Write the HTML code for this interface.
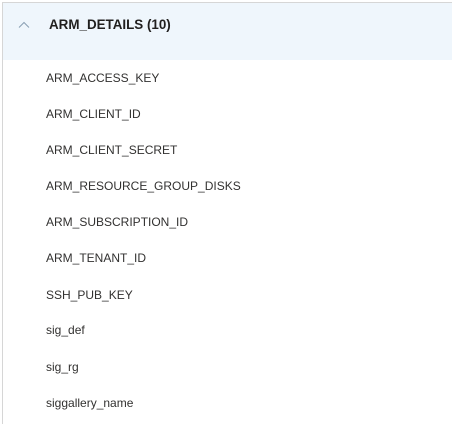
<!DOCTYPE html>
<html><head><style>
html,body{margin:0;padding:0;background:#fff;width:452px;height:424px;overflow:hidden;font-family:"Segoe UI","Liberation Sans",sans-serif}
.wrap{position:absolute;left:2px;top:2px;right:0;bottom:0;border-left:1px solid #d6d6d6;border-top:1px solid #d6d6d6}
.hdr{position:absolute;left:0;right:0;top:0;height:57px;background:#eff6fc}
.hdr span{position:absolute;left:46px;top:14px;font-size:13.4px;font-weight:bold;color:#201f1e}
.hdr svg{position:absolute;left:15px;top:18px}
.it{position:absolute;left:43px;font-size:12px;color:#323130}
</style></head><body>
<div class="wrap">
<div class="hdr"><svg width="12" height="8" viewBox="0 0 12 8"><path d="M1 6.5 L6 1.5 L11 6.5" fill="none" stroke="#8a9fb3" stroke-width="1"/></svg><span>ARM_DETAILS (10)</span></div>
<div class="it" style="top:68px">ARM_ACCESS_KEY</div>
<div class="it" style="top:104px">ARM_CLIENT_ID</div>
<div class="it" style="top:140px">ARM_CLIENT_SECRET</div>
<div class="it" style="top:176px">ARM_RESOURCE_GROUP_DISKS</div>
<div class="it" style="top:212px">ARM_SUBSCRIPTION_ID</div>
<div class="it" style="top:248px">ARM_TENANT_ID</div>
<div class="it" style="top:285px">SSH_PUB_KEY</div>
<div class="it" style="top:320px">sig_def</div>
<div class="it" style="top:357px">sig_rg</div>
<div class="it" style="top:393px">siggallery_name</div>
</div>
</body></html>
